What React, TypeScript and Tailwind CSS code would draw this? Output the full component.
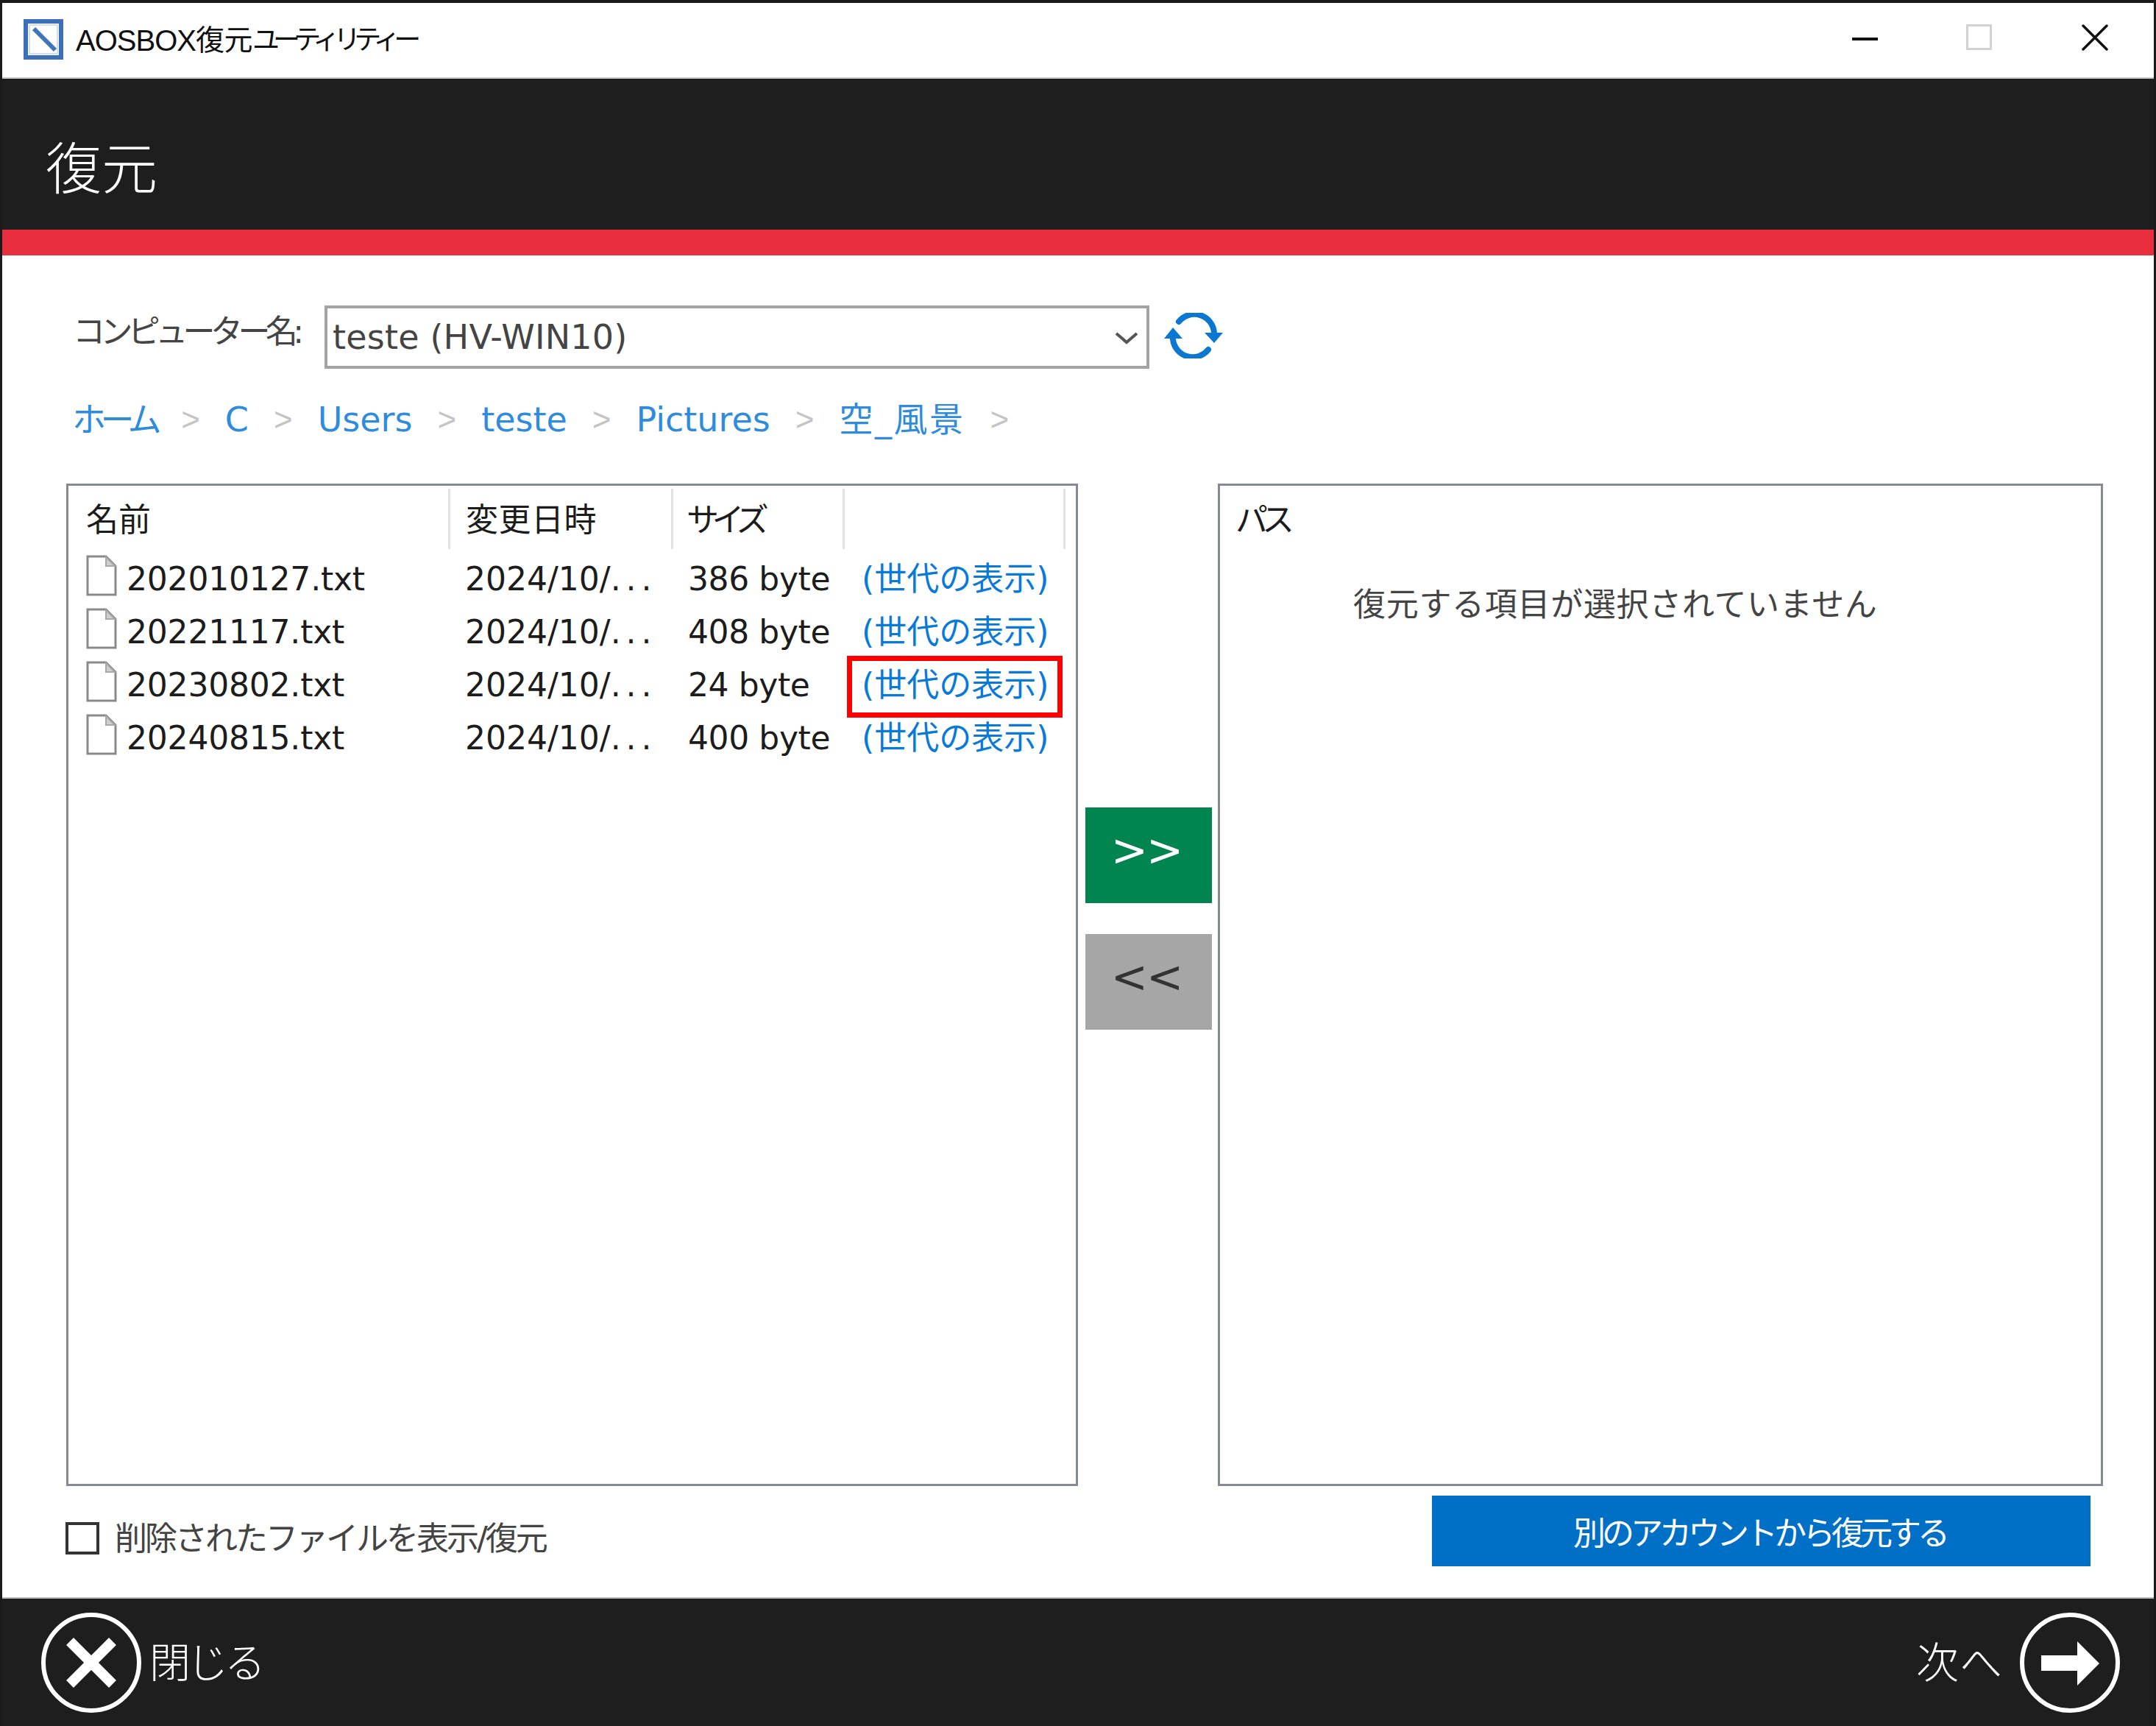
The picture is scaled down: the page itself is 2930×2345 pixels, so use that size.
import React from "react";

const rows = [
  { name: "202010127.txt", size: "386 byte" },
  { name: "20221117.txt", size: "408 byte" },
  { name: "20230802.txt", size: "24 byte", marked: true },
  { name: "20240815.txt", size: "400 byte" },
];

const crumbs = ["ホーム", "C", "Users", "teste", "Pictures", "空_風景"];

function FileIcon() {
  return (
    <svg width="42" height="56" viewBox="0 0 42 56" className="shrink-0 mt-[-10px]">
      <path d="M2 2H27L40 15V54H2Z" fill="#fff" stroke="#8a8a8a" strokeWidth="3" />
      <path d="M27 3V15H39Z" fill="#cfcfcf" stroke="#a8a8a8" strokeWidth="2" />
    </svg>
  );
}

export default function App() {
  return (
    <div className="w-[2930px] h-[2345px] bg-[#1a1a1a] pt-[4px] px-[3px] flex flex-col overflow-hidden font-['DejaVu_Sans','Noto_Sans_CJK_JP',sans-serif] text-[44px] leading-none text-[#1c1c1c]">
      {/* title bar */}
      <div className="h-[103px] shrink-0 bg-white flex items-center pl-[29px] pr-[62px] border-b-2 border-[#c8c8c8]">
        <svg width="54" height="55" viewBox="0 0 54 55" className="shrink-0 mt-[-2px]">
          <rect x="3" y="3" width="48" height="49" fill="#fff" stroke="#3b6fb8" strokeWidth="6" />
          <rect x="8" y="8" width="38" height="39" fill="none" stroke="#d3dff0" strokeWidth="2" />
          <path d="M14 13L43 42" stroke="#3f74bb" strokeWidth="6" />
        </svg>
        <div className="ml-[17px] text-[36px] text-[#111] tracking-[-0.5px] whitespace-nowrap flex items-center">
          <span className="font-['Liberation_Sans','Noto_Sans_CJK_JP',sans-serif] text-[40px] tracking-[-1px]">AOSBOX</span>
          <span className="text-[39px]">復元</span>
          <span className="text-[37px] tracking-[-8.9px]">ユーティリティー</span>
        </div>
        <div className="ml-auto flex items-center mt-[-8px]">
          <div className="w-[35px] h-[4px] bg-[#111] mt-[4px]" />
          <div className="w-[35px] h-[35px] border-[3px] border-[#d2d2d2] ml-[120px]" />
          <svg width="36" height="36" viewBox="0 0 36 36" className="ml-[122px]">
            <path d="M2 2L34 34M34 2L2 34" stroke="#111" strokeWidth="3.5" strokeLinecap="round" />
          </svg>
        </div>
      </div>

      {/* header */}
      <div className="h-[205px] shrink-0 bg-[#1e1e1e] flex items-center pl-[59px] pt-[42px] text-white text-[76px] font-light">
        復元
      </div>
      <div className="h-[35px] shrink-0 bg-[#e92e3d]" />

      {/* body */}
      <div className="flex-1 bg-white flex flex-col min-h-0">
        <div className="flex items-center h-[86px] mt-[68px] pl-[96px]">
          <span className="text-[#444] text-[44px] tracking-[-6.6px] whitespace-nowrap w-[342px] mt-[-14px]">コンピューター名:</span>
          <div className="w-[1121px] h-[86px] border-[4px] border-[#a3a3a3] flex items-center pl-[7px] text-[#444] text-[46px] tracking-[0.2px]">
            teste (HV-WIN10)
            <svg width="32" height="18" viewBox="0 0 32 18" className="ml-auto mr-[11px] mt-[2px]">
              <path d="M2 3L16 15L30 3" fill="none" stroke="#555" strokeWidth="4" />
            </svg>
          </div>
          <svg width="80" height="62" viewBox="0 0 80 62" className="ml-[20px] mt-[-4px]">
            <path d="M20 12A27 27 0 0 1 68 27" fill="none" stroke="#0a78d0" strokeWidth="8" strokeLinecap="round" />
            <path d="M12 36A27 27 0 0 0 60 50" fill="none" stroke="#0a78d0" strokeWidth="8" strokeLinecap="round" />
            <path d="M55 27H80L68 41Z" fill="#0a78d0" />
            <path d="M0 35H25L12 20Z" fill="#0a78d0" />
          </svg>
        </div>

        <div className="flex items-center h-[60px] mt-[39px] pl-[95px] gap-[34px] text-[46px] text-[#2f8bdc] whitespace-nowrap">
          {crumbs.map((c, i) => (
            <React.Fragment key={c}>
              <span className={i === 0 ? "tracking-[-7.5px]" : i === 5 ? "tracking-[2.5px]" : ""}>{c}</span>
              <span className="text-[#c4c4c4] text-[44px] font-['Liberation_Sans',sans-serif]">&gt;</span>
            </React.Fragment>
          ))}
        </div>

        {/* panels */}
        <div className="flex h-[1362px] mt-[57px] pl-[87px]">
          <div className="w-[1375px] border-[3px] border-[#868a91] pt-[4px] shrink-0">
            <div className="grid grid-cols-[519px_303px_233px_300px] h-[82px]">
              <div className="border-r-[3px] border-[#e2e2e2] flex items-center pl-[24px] pt-[3px]">名前</div>
              <div className="border-r-[3px] border-[#e2e2e2] flex items-center pl-[21px] pt-[3px] tracking-[0.5px]">変更日時</div>
              <div className="border-r-[3px] border-[#e2e2e2] flex items-center pl-[18px] pt-[3px] tracking-[-9.5px]">サイズ</div>
              <div className="border-r-[3px] border-[#e2e2e2]" />
            </div>
            <div className="pt-[5px]">
              {rows.map((r) => (
                <div key={r.name} className="grid grid-cols-[519px_303px_233px_300px] h-[72px] items-center">
                  <div className="flex items-center pl-[24px]">
                    <FileIcon />
                    <span className="ml-[13px] tracking-[-0.2px]">{r.name}</span>
                  </div>
                  <div className="pl-[20px] whitespace-nowrap">
                    2024/10/<span className="tracking-[7px]">...</span>
                  </div>
                  <div className="pl-[20px] whitespace-nowrap tracking-[-0.4px]">{r.size}</div>
                  <div className="relative pl-[23px] h-full flex items-center text-[#0a7ad8] text-[44px] whitespace-nowrap">
                    <span>(世代の表示)</span>
                    {r.marked && <div className="absolute left-[3px] top-[-4px] w-[293px] h-[84px] border-[7px] border-[#ff0000]" />}
                  </div>
                </div>
              ))}
            </div>
          </div>

          <div className="w-[172px] ml-[10px] shrink-0 flex flex-col gap-[42px] pt-[440px] text-[60px]">
            <div className="h-[130px] bg-[#008550] text-white flex items-center justify-center tracking-[-2px] pb-[14px] pr-[6px]">&gt;&gt;</div>
            <div className="h-[130px] bg-[#a6a6a6] text-[#333] flex items-center justify-center tracking-[-2px] pb-[14px] pr-[6px]">&lt;&lt;</div>
          </div>

          <div className="w-[1203px] ml-[8px] shrink-0 border-[3px] border-[#868a91] pt-[4px]">
            <div className="h-[82px] flex items-center pl-[21px] pt-[3px] tracking-[-8px]">パス</div>
            <div className="mt-[54px] pl-[181px] text-[#444] text-[44px] tracking-[0.7px] whitespace-nowrap">復元する項目が選択されていません</div>
          </div>
        </div>

        <div className="flex items-start mt-[13px] pl-[86px]">
          <div className="flex items-center mt-[35px]">
            <div className="w-[46px] h-[44px] border-[4px] border-[#333]" />
            <span className="ml-[21px] mt-[2px] text-[#444] text-[44px] tracking-[-3px] whitespace-nowrap">削除されたファイルを表示/復元</span>
          </div>
          <div className="ml-auto mr-[86px] w-[895px] h-[96px] bg-[#0070c6] text-white flex items-center justify-center tracking-[-5px] whitespace-nowrap pt-[8px] pr-[4px]">
            別のアカウントから復元する
          </div>
        </div>
      </div>

      {/* footer */}
      <div className="h-[175px] shrink-0 bg-[#1e1e1e] border-t-2 border-[#bdbdbd] flex items-center pl-[52px] pr-[45px] text-white text-[56px] font-light">
        <svg width="138" height="138" viewBox="0 0 138 138" className="shrink-0">
          <circle cx="69" cy="69" r="65" fill="none" stroke="#fff" strokeWidth="6" />
          <path d="M40 40L98 98M98 40L40 98" stroke="#fff" strokeWidth="14" />
        </svg>
        <span className="ml-[10px] mt-[2px] tracking-[-5px] whitespace-nowrap">閉じる</span>
        <span className="ml-auto mt-[2px] text-[58px] whitespace-nowrap tracking-[1px]">次へ</span>
        <svg width="138" height="138" viewBox="0 0 138 138" className="shrink-0 ml-[22px]">
          <circle cx="69" cy="69" r="65" fill="none" stroke="#fff" strokeWidth="6" />
          <path d="M30 59H79V40L109 70L79 100V80H30Z" fill="#fff" />
        </svg>
      </div>
    </div>
  );
}
